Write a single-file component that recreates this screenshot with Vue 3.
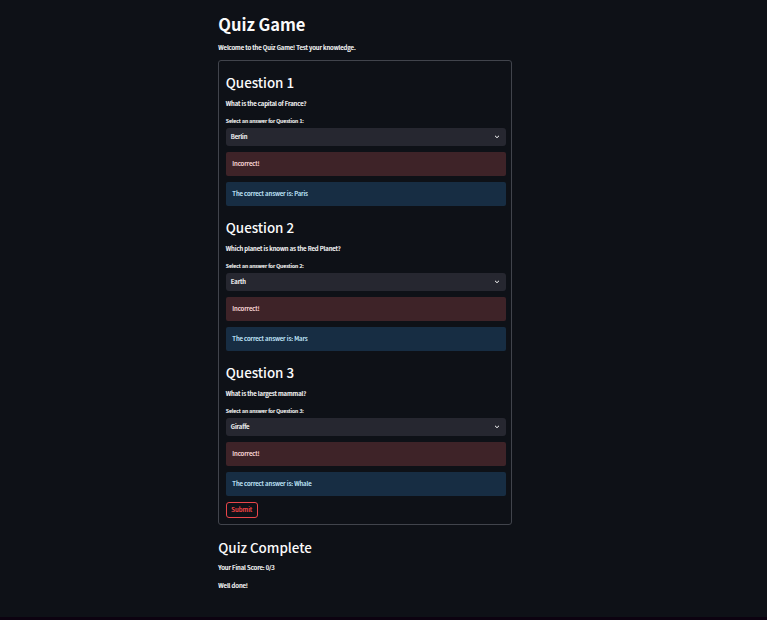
<script setup>
const questions = [
  { id: 1, text: 'What is the capital of France?', picked: 'Berlin', answer: 'Paris' },
  { id: 2, text: 'Which planet is known as the Red Planet?', picked: 'Earth', answer: 'Mars' },
  { id: 3, text: 'What is the largest mammal?', picked: 'Giraffe', answer: 'Whale' }
]
</script>

<template>
  <div class="page">
    <main class="column">
      <h1>Quiz Game</h1>
      <p class="intro">Welcome to the Quiz Game! Test your knowledge.</p>
      <form class="quiz" @submit.prevent>
        <section v-for="q in questions" :key="q.id" class="question">
          <h2>Question {{ q.id }}</h2>
          <p>{{ q.text }}</p>
          <label>Select an answer for Question {{ q.id }}:</label>
          <div class="select">
            <span>{{ q.picked }}</span>
            <svg class="chevron" viewBox="0 0 6 4"><path d="M1 0.8 L3 2.7 L5 0.8" /></svg>
          </div>
          <div class="alert error">Incorrect!</div>
          <div class="alert info">The correct answer is: {{ q.answer }}</div>
        </section>
        <button class="submit">Submit</button>
      </form>
      <h2 class="done">Quiz Complete</h2>
      <p class="score">Your Final Score: 0/3</p>
      <p class="well">Well done!</p>
    </main>
  </div>
</template>

<style>
body {
  background: #0e1117;
}
</style>

<style scoped>
.page {
  box-sizing: border-box;
  height: 620px;
  padding: 11px 0 0 218.3px;
  background: #0e1117;
  border-bottom: 3px solid #0c0210;
  color: #fafafa;
  font-family: "Noto Sans CJK SC", "Noto Sans", sans-serif;
  font-size: 6px;
  font-weight: 500;
  letter-spacing: -0.08px;
  overflow: hidden;
  white-space: nowrap;
}
.column {
  width: 294px;
}
h1,
h2,
p {
  margin: 0;
}
h1 {
  height: 26px;
  line-height: 26px;
  font-size: 16.5px;
  font-weight: 700;
  letter-spacing: -0.05px;
}
h2 {
  height: 32px;
  line-height: 32px;
  font-size: 13.4px;
  font-weight: 500;
  letter-spacing: -0.03px;
}
p {
  height: 10px;
  line-height: 10px;
  color: #fff;
  -webkit-text-stroke: 0.15px currentColor;
}
.intro {
  margin: 6px 0 7px;
}
.quiz {
  box-sizing: border-box;
  height: 465px;
  padding: 5px 5px 6px 6.5px;
  border: 1px solid #41444c;
  border-radius: 3px;
}
.question {
  height: 145px;
}
.question p {
  margin-top: 1px;
}
label {
  display: block;
  height: 8px;
  margin: 8px 0 3px;
  line-height: 8px;
  font-size: 5.2px;
  letter-spacing: -0.04px;
  -webkit-text-stroke: 0.15px currentColor;
}
.select {
  display: flex;
  align-items: center;
  justify-content: space-between;
  height: 18px;
  box-sizing: border-box;
  padding: 0 6px 0 5px;
  border-radius: 3px;
  background: #262730;
  -webkit-text-stroke: 0.15px currentColor;
}
.select span {
  padding-bottom: 2px;
}
.chevron {
  width: 6px;
  height: 4px;
  fill: none;
  stroke: #fafafa;
  stroke-width: 1;
}
.alert {
  display: flex;
  align-items: center;
  height: 24px;
  box-sizing: border-box;
  margin-top: 6px;
  padding: 0 0 2px 6.5px;
  border-radius: 2px;
  -webkit-text-stroke: 0.1px currentColor;
}
.error {
  background: #3e2328;
  color: #ffdede;
}
.info {
  background: #172d43;
  color: #c7ebff;
}
.submit {
  display: flex;
  align-items: center;
  justify-content: center;
  width: 32px;
  height: 16px;
  box-sizing: border-box;
  margin-top: 1px;
  padding: 0;
  border: 1px solid #e9464a;
  border-radius: 3px;
  background: transparent;
  color: #ff4b4b;
  font-family: inherit;
  font-size: 6px;
  font-weight: 500;
  line-height: 10px;
  -webkit-text-stroke: 0.1px currentColor;
}
.done {
  margin-top: 6px;
}
.score {
  margin-top: 0;
}
.well {
  margin-top: 8px;
}
</style>
